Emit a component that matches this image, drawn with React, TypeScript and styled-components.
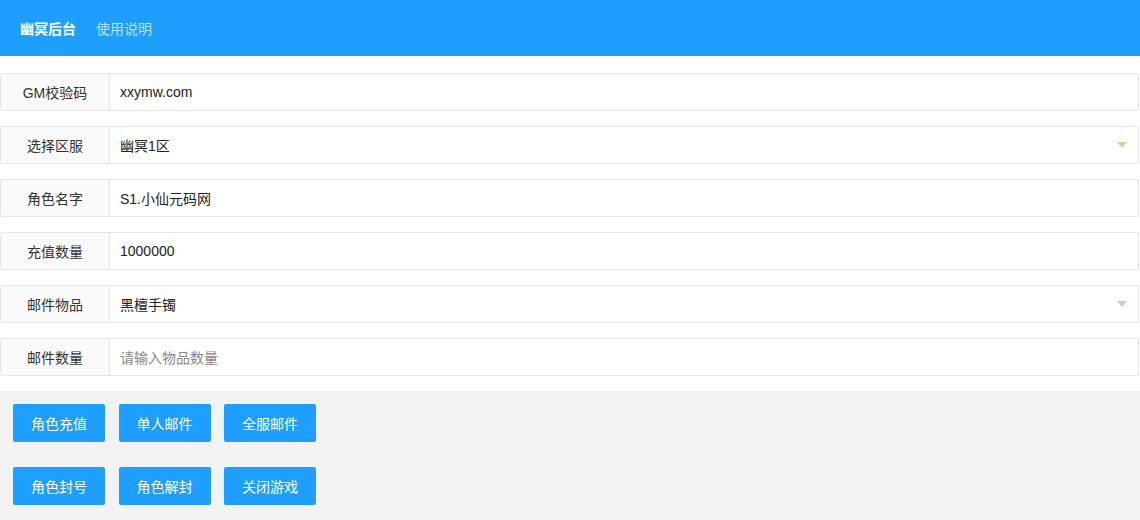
import styled, { createGlobalStyle } from 'styled-components';

const GlobalStyle = createGlobalStyle`
  html, body {
    margin: 0;
    padding: 0;
    background: #fff;
  }
  body {
    font-family: "Liberation Sans", "Noto Sans CJK SC", sans-serif;
    font-size: 14px;
    color: #333;
  }
`;

const Header = styled.div`
  height: 56px;
  background: #1e9fff;
  display: flex;
  align-items: center;
  padding-left: 20px;
  gap: 20px;
`;

const NavItem = styled.span<{ $active?: boolean }>`
  font-size: 14px;
  font-weight: ${(p) => (p.$active ? 700 : 400)};
  color: ${(p) => (p.$active ? '#fff' : 'rgba(255,255,255,0.7)')};
`;

const Form = styled.div`
  padding-top: 17px;
  display: flex;
  flex-direction: column;
  gap: 15px;
  padding-bottom: 15px;
`;

const Row = styled.div`
  height: 38px;
  box-sizing: border-box;
  border: 1px solid #e6e6e6;
  border-radius: 2px;
  display: flex;
  margin-right: 1px;
  position: relative;
`;

const Label = styled.div`
  width: 109px;
  flex-shrink: 0;
  box-sizing: border-box;
  border-right: 1px solid #e6e6e6;
  background: #fafafa;
  display: flex;
  align-items: center;
  justify-content: center;
  color: #333;
`;

const Value = styled.div<{ $placeholder?: boolean }>`
  flex: 1;
  display: flex;
  align-items: center;
  padding-left: 10px;
  color: ${(p) => (p.$placeholder ? '#888' : '#222')};
`;

const Caret = styled.span<{ $color: string }>`
  position: absolute;
  right: 11px;
  top: 15px;
  width: 0;
  height: 0;
  border-left: 5px solid transparent;
  border-right: 5px solid transparent;
  border-top: 6px solid ${(p) => p.$color};
`;

const Actions = styled.div`
  background: #f2f2f2;
  padding: 13px 13px 16px;
  display: flex;
  flex-direction: column;
  gap: 25px;
`;

const ButtonRow = styled.div`
  display: flex;
  gap: 13.5px;
`;

const Button = styled.button`
  height: 38px;
  padding: 0 18px;
  border: none;
  border-radius: 2px;
  background: #1e9fff;
  color: #fff;
  font-family: inherit;
  font-size: 14px;
  cursor: pointer;
`;

const fields = [
  { label: 'GM校验码', value: 'xxymw.com' },
  { label: '选择区服', value: '幽冥1区', caret: '#e2c99a' },
  { label: '角色名字', value: 'S1.小仙元码网' },
  { label: '充值数量', value: '1000000' },
  { label: '邮件物品', value: '黑檀手镯', caret: '#bccaf2' },
  { label: '邮件数量', value: '请输入物品数量', placeholder: true },
];

const buttons = [
  ['角色充值', '单人邮件', '全服邮件'],
  ['角色封号', '角色解封', '关闭游戏'],
];

export default function App() {
  return (
    <>
      <GlobalStyle />
      <Header>
        <NavItem $active>幽冥后台</NavItem>
        <NavItem>使用说明</NavItem>
      </Header>
      <Form>
        {fields.map((f) => (
          <Row key={f.label}>
            <Label>{f.label}</Label>
            <Value $placeholder={f.placeholder}>{f.value}</Value>
            {f.caret && <Caret $color={f.caret} />}
          </Row>
        ))}
      </Form>
      <Actions>
        {buttons.map((row, i) => (
          <ButtonRow key={i}>
            {row.map((b) => (
              <Button key={b}>{b}</Button>
            ))}
          </ButtonRow>
        ))}
      </Actions>
    </>
  );
}
